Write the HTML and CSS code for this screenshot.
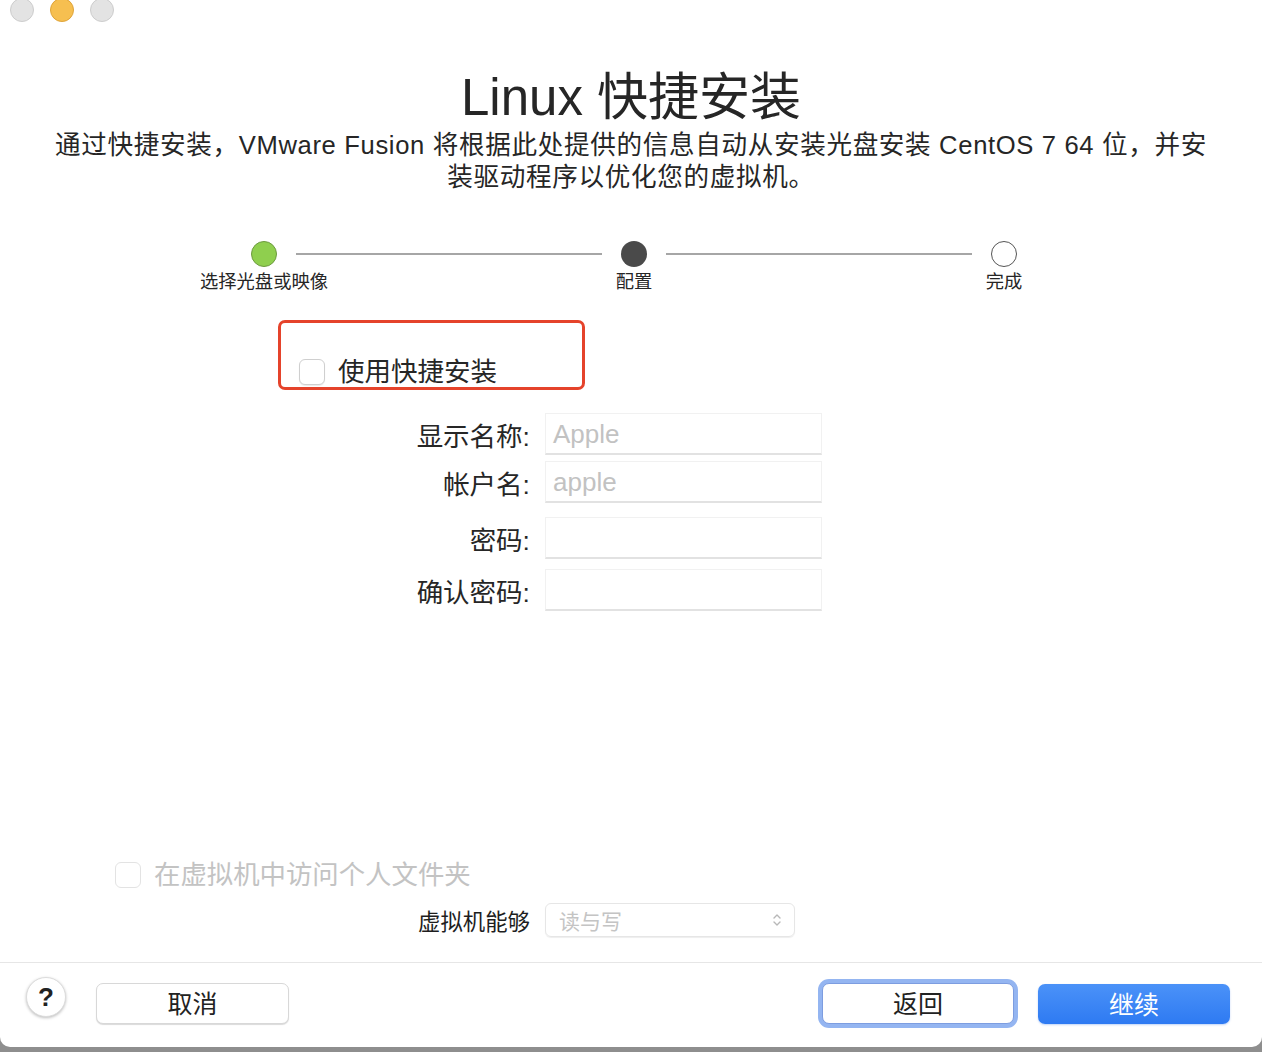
FILE: index.html
```html
<!DOCTYPE html>
<html lang="zh-CN">
<head>
<meta charset="utf-8">
<title>Linux 快捷安装</title>
<link rel="stylesheet" href="styles.css">
</head>
<body>
<div class="window">
  <div class="traffic">
    <span class="light grey"></span>
    <span class="light yellow"></span>
    <span class="light grey"></span>
  </div>

  <h1 class="title">Linux 快捷安装</h1>
  <p class="subtitle">通过快捷安装，VMware Fusion 将根据此处提供的信息自动从安装光盘安装 CentOS 7 64 位，并安<br>装驱动程序以优化您的虚拟机。</p>

  <div class="stepper">
    <span class="dot done"></span>
    <span class="track"></span>
    <span class="dot current"></span>
    <span class="track"></span>
    <span class="dot todo"></span>
  </div>
  <div class="step-labels">
    <span>选择光盘或映像</span>
    <span>配置</span>
    <span>完成</span>
  </div>

  <div class="highlight">
    <label class="check-row">
      <span class="checkbox"></span>
      <span class="check-text">使用快捷安装</span>
    </label>
  </div>

  <div class="form">
    <div class="row r1"><span class="lbl">显示名称:</span><span class="field placeholder">Apple</span></div>
    <div class="row r2"><span class="lbl">帐户名:</span><span class="field placeholder">apple</span></div>
    <div class="row r3"><span class="lbl">密码:</span><span class="field"></span></div>
    <div class="row r4"><span class="lbl">确认密码:</span><span class="field"></span></div>
  </div>

  <div class="share-row">
    <span class="checkbox disabled"></span>
    <span class="share-text">在虚拟机中访问个人文件夹</span>
  </div>

  <div class="access-row">
    <span class="access-lbl">虚拟机能够</span>
    <span class="select">
      <span class="select-text">读与写</span>
      <svg class="chev" width="10" height="16" viewBox="0 0 10 16"><path d="M2 6 L5 3 L8 6 M2 10 L5 13 L8 10" fill="none" stroke="#b8b8b8" stroke-width="1.4" stroke-linecap="round" stroke-linejoin="round"/></svg>
    </span>
  </div>

  <div class="footer">
    <span class="help">?</span>
    <span class="btn cancel">取消</span>
    <div class="right-btns">
      <span class="btn back">返回</span>
      <span class="btn primary">继续</span>
    </div>
  </div>
</div>
</body>
</html>
```

FILE: styles.css
```css
* { box-sizing: border-box; }
html, body { margin: 0; padding: 0; }
body {
  background: linear-gradient(#b0b0b0, #8e8e8e);
  height: 1052px;
  overflow: hidden;
  font-family: "Liberation Sans", "Noto Sans CJK SC", sans-serif;
  color: #262626;
}
.window {
  width: 1262px;
  height: 1047px;
  background: #fff;
  border-radius: 0 0 10px 10px;
  display: flex;
  flex-direction: column;
}
.traffic {
  display: flex;
  gap: 16px;
  margin: -2px 0 0 10px;
  height: 24px;
}
.light {
  width: 24px;
  height: 24px;
  border-radius: 50%;
  display: block;
}
.light.grey { background: #e3e3e3; border: 1px solid #cdcdcd; }
.light.yellow { background: #f6bf50; border: 1px solid #dfa43a; }

.title {
  margin: 48px 0 0;
  font-size: 51px;
  line-height: 56px;
  font-weight: 400;
  text-align: center;
  color: #262626;
}
.subtitle {
  margin: 3px 0 0;
  font-size: 25.6px;
  line-height: 32px;
  letter-spacing: 0.65px;
  text-align: center;
  color: #262626;
}

.stepper {
  display: flex;
  align-items: center;
  margin: 48px 0 0 251px;
  width: 766px;
  height: 26px;
}
.dot {
  width: 26px;
  height: 26px;
  border-radius: 50%;
  flex: none;
}
.dot.done { background: #8fcf4e; border: 1px solid #6c9a3e; }
.dot.current { background: #4a4a4a; }
.dot.todo { background: #fff; border: 1px solid #555; }
.track {
  flex: 1;
  height: 2px;
  background: #a6a6a6;
  margin: 0 19px;
}
.step-labels {
  display: grid;
  grid-template-columns: repeat(3, 370px);
  margin: 3px 0 0 79px;
  font-size: 18.3px;
  line-height: 24px;
  color: #262626;
}
.step-labels span { text-align: center; }

.highlight {
  margin: 26px 0 0 278px;
  width: 307px;
  height: 70px;
  border: 3px solid #e5432b;
  border-radius: 7px;
  padding: 35px 0 0 18px;
}
.check-row {
  display: flex;
  align-items: center;
  gap: 13px;
  height: 28px;
}
.checkbox {
  width: 26px;
  height: 26px;
  border-radius: 6px;
  border: 1px solid #cfcfcf;
  background: #fff;
  box-shadow: 0 1px 1px rgba(0,0,0,0.08);
  flex: none;
  display: block;
}
.checkbox.disabled { border-color: #e3e3e3; box-shadow: none; }
.check-text {
  font-size: 26.5px;
  line-height: 28px;
  color: #262626;
}

.form {
  margin-top: 23px;
  display: flex;
  flex-direction: column;
}
.row {
  display: grid;
  grid-template-columns: 530px 277px;
  column-gap: 15px;
  align-items: center;
  height: 42px;
}
.row.r2 { margin-top: 6px; }
.row.r3 { margin-top: 14px; }
.row.r4 { margin-top: 10px; }
.lbl {
  text-align: right;
  font-size: 26.5px;
  color: #262626;
}
.field {
  display: block;
  height: 42px;
  border: 1px solid #f1f1f1;
  border-bottom: 2px solid #e2e2e2;
  background: #fff;
  font-size: 26px;
  line-height: 40px;
  padding-left: 7px;
  color: #262626;
}
.field.placeholder { color: #c2c2c2; }

.share-row {
  display: flex;
  align-items: center;
  gap: 13px;
  margin: 251px 0 0 115px;
  height: 26px;
}
.share-text {
  font-size: 26.4px;
  line-height: 26px;
  color: #c3c3c3;
}

.access-row {
  display: grid;
  grid-template-columns: 530px 250px;
  column-gap: 15px;
  align-items: center;
  margin-top: 15px;
  height: 34px;
}
.access-lbl {
  text-align: right;
  font-size: 22.4px;
  color: #1e1e1e;
}
.select {
  display: flex;
  align-items: center;
  justify-content: space-between;
  height: 34px;
  border: 1px solid #e6e6e6;
  border-radius: 6px;
  box-shadow: 0 1px 1px rgba(0,0,0,0.07);
  padding: 0 12px 0 13px;
}
.select-text {
  font-size: 21px;
  color: #c4c4c4;
}

.footer {
  margin-top: 25px;
  border-top: 1px solid #e6e6e6;
  flex: 1;
  display: flex;
  align-items: flex-start;
  padding: 20px 32px 0 26px;
}
.help {
  width: 40px;
  height: 40px;
  margin-top: -6px;
  border-radius: 50%;
  background: #fff;
  border: 1px solid #dcdcdc;
  box-shadow: 0 1px 3px rgba(0,0,0,0.25);
  display: flex;
  align-items: center;
  justify-content: center;
  font-size: 26px;
  font-weight: 700;
  color: #222;
}
.btn {
  display: flex;
  align-items: center;
  justify-content: center;
  width: 192px;
  height: 41px;
  border-radius: 7px;
  font-size: 25px;
  color: #222;
  padding-bottom: 3px;
}
.cancel {
  margin-left: 30px;
  width: 193px;
  background: #fff;
  border: 1px solid #d8d8d8;
  box-shadow: 0 1px 1px rgba(0,0,0,0.15);
}
.right-btns {
  margin-left: auto;
  display: flex;
  align-items: flex-start;
  gap: 24px;
}
.back {
  background: #fff;
  border: 1px solid #7d9de0;
  box-shadow: 0 0 0 4px #94b5f1;
}
.primary {
  margin-top: 1px;
  height: 40px;
  background: linear-gradient(#4b92f8, #2e7af2);
  color: #fff;
  box-shadow: 0 1px 2px rgba(40,110,230,0.3);
}
```
